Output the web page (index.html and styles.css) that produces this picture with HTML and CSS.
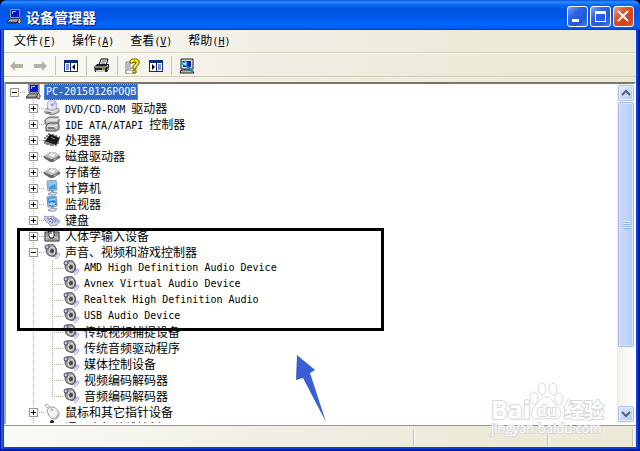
FILE: index.html
```html
<!DOCTYPE html>
<html lang="zh-CN">
<head>
    <meta charset="UTF-8">
    <meta name="viewport" content="width=device-width, initial-scale=1.0">
    <title>设备管理器</title>
    <link rel="stylesheet" href="styles.css">
</head>
<body>
    <!-- Iconos compartidos -->
    <svg class="sprite" width="0" height="0" aria-hidden="true">
        <symbol id="i-pc" viewBox="0 0 16 16">
            <path d="M4 0h10v9H4z" fill="#d8d8d8" stroke="#555"/>
            <path d="M5 1h8v7H5z" fill="#0818d0"/>
            <path d="M6 2h4v1H7v2H6z" fill="#8cf"/>
            <path d="M4 10h9l-2 3H1z" fill="#ddd" stroke="#333"/>
            <path d="M4 11h7M3 12h7" stroke="#888" stroke-dasharray="1 1"/>
            <path d="M1 14h10l2-3" stroke="#222" fill="none"/>
            <path d="M13 9l2 2v2l-1 2-2-1v-2z" fill="#c8c8c8" stroke="#444"/>
        </symbol>
        <symbol id="i-cd" viewBox="0 0 16 16">
            <path d="M1 10l5-3 9 2v3l-6 3-8-2z" fill="#c4c4c4" stroke="#777"/>
            <path d="M1 10l8 2 6-3" fill="none" stroke="#eee"/>
            <circle cx="8" cy="5" r="5" fill="#dde2f4" stroke="#a8adc4"/>
            <path d="M8 5l3-4 2 3z" fill="#b8a8ee"/>
            <path d="M8 5l-4 2 2 2z" fill="#fff"/>
            <circle cx="8" cy="5" r="1" fill="#fff" stroke="#889"/>
            <path d="M3 12l4 1" stroke="#555"/>
        </symbol>
        <symbol id="i-ide" viewBox="0 0 16 16">
            <path d="M1 4l4-3h9l1 2v3l-3 2H1z" fill="#c9c9c9" stroke="#555"/>
            <path d="M2 4h10l3-2" fill="none" stroke="#f4f4f4"/>
            <path d="M2 10l3-3h9l1 2v4l-3 2H2z" fill="#bdbdbd" stroke="#444"/>
            <path d="M3 10h9l2-2" fill="none" stroke="#fff"/>
            <path d="M4 12h6" stroke="#333"/>
            <path d="M10 13h2" stroke="#3a3"/>
        </symbol>
        <symbol id="i-cpu" viewBox="0 0 16 16">
            <path d="M6 2l10 4-4 7-11-4z" fill="#1a1a1a"/>
            <path d="M1 8v4M3 9v4M5 10v3M7 10v4M9 11v3M12 10v4M14 8v4M2 6H0M4 4H2M6 2H4M9 2v2M12 3v2M15 5h1" stroke="#111"/>
            <path d="M7 5l4 2" stroke="#888"/>
        </symbol>
        <symbol id="i-disk" viewBox="0 0 16 16">
            <path d="M0 8l6-4h5l5 4v2l-7 4h-3l-6-4z" fill="#666"/>
            <path d="M0 8l6-4h5l5 3-7 4H7z" fill="#c4c4c4"/>
            <path d="M5 7l3-2 4 2-3 2z" fill="#f3f3f3"/>
            <path d="M10 12l3-2" stroke="#ccc"/>
        </symbol>
        <symbol id="i-screen" viewBox="0 0 16 16">
            <path d="M3 1l9-1 1 10-9 1z" fill="#cfd9e6" stroke="#8796ad"/>
            <path d="M4 2l7-1 1 8-7 1z" fill="#3d95ee"/>
            <path d="M4 2l7-1v3L5 7z" fill="#8ccaff"/>
            <path d="M7 11h3v2H7z" fill="#9aa6b8"/>
            <path d="M4 14l4-2 5 1-2 2H6z" fill="#dde3eb" stroke="#8b97aa"/>
        </symbol>
        <symbol id="i-monitor" viewBox="0 0 16 16">
            <path d="M3 1l9-1 1 10-9 1z" fill="#bfd0e2" stroke="#7086a4"/>
            <path d="M4 2l7-1 1 8-7 1z" fill="#2878dc"/>
            <path d="M5 3l6-1v2L5 5z" fill="#7fe3ff"/>
            <path d="M5 7l3-1 3 1v2H5z" fill="#8ed4ff"/>
            <path d="M7 11h3v2H7z" fill="#8d9aae"/>
            <path d="M4 14l4-2 5 1-2 2H6z" fill="#dde3eb" stroke="#8b97aa"/>
        </symbol>
        <symbol id="i-keyboard" viewBox="0 0 16 16">
            <path d="M0 4l4 1 5-1 7 5-3 4-6 1-7-7z" fill="#cdd3ea" stroke="#8e95b8"/>
            <path d="M3 7l7-1M4 8l8-1M5 10l8-2M7 11l7-2" stroke="#6f79ac" stroke-dasharray="2 1"/>
        </symbol>
        <symbol id="i-hid" viewBox="0 0 16 16">
            <path d="M1 4h14v9H1z" fill="#ccc" stroke="#222"/>
            <path d="M2 6h2M2 8h2M11 6h3M11 8h3M3 11h10" stroke="#666"/>
            <path d="M5 0v4M5 3h5v5q0 2-2 2H7q-2 0-2-2z" fill="#fff" stroke="#111"/>
            <path d="M7 3v3" stroke="#111"/>
        </symbol>
        <symbol id="i-sound" viewBox="0 0 16 16">
            <path d="M4 1h5l4 4v5l-3 3H8L3 8z" fill="#666"/>
            <ellipse cx="7" cy="6" rx="5" ry="6" fill="#999" stroke="#555"/>
            <ellipse cx="8" cy="7" rx="3" ry="4" fill="#aaa" stroke="#ddd"/>
            <circle cx="8" cy="7" r="2" fill="#444"/>
            <circle cx="3" cy="3" r="2" fill="#c3c6ec" stroke="#4b4d6b"/>
            <path d="M14 8q1 3-3 5M16 9q0 4-5 6" fill="none" stroke="#8f97ec"/>
        </symbol>
        <symbol id="i-mouse" viewBox="0 0 16 16">
            <path d="M5 4Q2 4 1 1q3-2 5 2" fill="none" stroke="#aaa"/>
            <path d="M3 6q2-4 6-3 6 2 6 8-1 4-5 4-5 0-7-9z" fill="#f3f3f3" stroke="#999"/>
            <path d="M14 7q2 5-2 8h-3q5-2 5-8z" fill="#aaa"/>
            <path d="M7 4l1 3" stroke="#bbb"/>
            <circle cx="8" cy="6" r="1" fill="#99c"/>
        </symbol>
        <symbol id="i-usb" viewBox="0 0 16 16">
            <circle cx="8" cy="2" r="2" fill="#222"/>
            <path d="M8 3v12M4 6v3l4 3M12 6v2l-4 3" fill="none" stroke="#222" stroke-width="2"/>
        </symbol>
        <symbol id="i-back" viewBox="0 0 16 16">
            <path d="M1 8l5-5v3h8v4H6v3z" fill="#b5b1a4"/>
        </symbol>
        <symbol id="i-print" viewBox="0 0 16 16">
            <path d="M5 7l2-6h7l-2 6z" fill="#fff" stroke="#000"/>
            <path d="M8 3h4M7 5h4" stroke="#555"/>
            <path d="M0 9l3-3h12v5l-2 3H1z" fill="#222"/>
            <path d="M1 9h11l2-2" fill="none" stroke="#ddd"/>
            <path d="M2 12h9v2H2z" fill="#ccc"/>
            <path d="M8 11h3" stroke="#ee0"/>
            <path d="M13 12l2-2M13 9h1" stroke="#aaa"/>
        </symbol>
        <symbol id="i-help" viewBox="0 0 16 16">
            <path d="M1 4h9v10l-2 2H1z" fill="#fff" stroke="#777"/>
            <path d="M2 6h4M2 8h4M2 10h6M2 12h5" stroke="#777"/>
            <path d="M5 5V3l2-2h5l2 2v3l-3 3v2H8V8l3-3V4H8v1z" fill="#fff200" stroke="#655c00"/>
            <path d="M8 12h3v3H8z" fill="#fff200" stroke="#655c00"/>
        </symbol>
        <symbol id="i-scan" viewBox="0 0 16 16">
            <path d="M2 1h12v10H2z" fill="#ddd" stroke="#222"/>
            <path d="M4 3h8v6H4z" fill="#0a22a8"/>
            <path d="M2 12h11l2 3H1z" fill="#bbb" stroke="#222"/>
            <path d="M6 6l8 8" stroke="#1a7fb0" stroke-width="2"/>
            <path d="M3 3l2 2 1-2 2 1v3L6 8 3 6z" fill="#9df" stroke="#178bc0"/>
        </symbol>
    </svg>

    <div class="window">
        <header class="titlebar">
            <svg class="icon"><use href="#i-pc"/></svg>
            <h1>设备管理器</h1>
            <div class="window-buttons">
                <button aria-label="最小化"><svg viewBox="0 0 21 21"><path d="M5 13h7v3H5z" fill="#fff"/></svg></button>
                <button aria-label="最大化"><svg viewBox="0 0 21 21"><path d="M5 5h11v11H5zM6 8v7h9V8z" fill="#fff" fill-rule="evenodd"/></svg></button>
                <button class="close" aria-label="关闭"><svg viewBox="0 0 21 21"><path d="M5 5l10 10M15 5L5 15" stroke="#fff" stroke-width="2"/></svg></button>
            </div>
        </header>

        <nav class="menu">
            <button>文件<span class="latin">(<u>F</u>)</span></button>
            <button>操作<span class="latin">(<u>A</u>)</span></button>
            <button>查看<span class="latin">(<u>V</u>)</span></button>
            <button>帮助<span class="latin">(<u>H</u>)</span></button>
        </nav>

        <div class="toolbar">
            <button aria-label="后退" disabled><svg class="icon"><use href="#i-back"/></svg></button>
            <button aria-label="前进" disabled><svg class="icon flip"><use href="#i-back"/></svg></button>
            <span class="separator"></span>
            <button aria-label="显示/隐藏控制台树"><svg class="icon" viewBox="0 0 16 16"><path d="M1 2h14v12H1z" fill="#0a2a80"/><path d="M2 5h5v8H2zM8 5h6v8H8z" fill="#fff"/><path d="M3 7h3M3 9h3M3 11h3" stroke="#0a2a80"/><path d="M12 6v6L9 9z" fill="#000"/></svg></button>
            <span class="separator"></span>
            <button aria-label="打印"><svg class="icon"><use href="#i-print"/></svg></button>
            <span class="separator"></span>
            <button aria-label="帮助"><svg class="icon"><use href="#i-help"/></svg></button>
            <button aria-label="显示/隐藏操作窗格"><svg class="icon" viewBox="0 0 16 16"><path d="M1 2h14v12H1z" fill="#0a2a80"/><path d="M2 5h6v8H2zM9 5h5v8H9z" fill="#fff"/><path d="M10 7h3M10 9h3M10 11h3" stroke="#0a2a80"/><path d="M4 6v6l3-3z" fill="#000"/></svg></button>
            <span class="separator"></span>
            <button aria-label="扫描检测硬件改动"><svg class="icon"><use href="#i-scan"/></svg></button>
        </div>

        <main class="pane">
            <ul class="tree">
                <li>
                    <div class="row"><span class="guide"><button class="toggle open" aria-label="折叠"></button></span><svg class="icon"><use href="#i-pc"/></svg><span class="name selected latin">PC-20150126POQB</span></div>
                    <ul class="branch">
                        <li><div class="row"><span class="guide"><button class="toggle" aria-label="展开"></button></span><svg class="icon"><use href="#i-cd"/></svg><span class="name"><span class="latin">DVD/CD-ROM </span>驱动器</span></div></li>
                        <li><div class="row"><span class="guide"><button class="toggle" aria-label="展开"></button></span><svg class="icon"><use href="#i-ide"/></svg><span class="name"><span class="latin">IDE ATA/ATAPI </span>控制器</span></div></li>
                        <li><div class="row"><span class="guide"><button class="toggle" aria-label="展开"></button></span><svg class="icon"><use href="#i-cpu"/></svg><span class="name">处理器</span></div></li>
                        <li><div class="row"><span class="guide"><button class="toggle" aria-label="展开"></button></span><svg class="icon"><use href="#i-disk"/></svg><span class="name">磁盘驱动器</span></div></li>
                        <li><div class="row"><span class="guide"><button class="toggle" aria-label="展开"></button></span><svg class="icon"><use href="#i-disk"/></svg><span class="name">存储卷</span></div></li>
                        <li><div class="row"><span class="guide"><button class="toggle" aria-label="展开"></button></span><svg class="icon"><use href="#i-screen"/></svg><span class="name">计算机</span></div></li>
                        <li><div class="row"><span class="guide"><button class="toggle" aria-label="展开"></button></span><svg class="icon"><use href="#i-monitor"/></svg><span class="name">监视器</span></div></li>
                        <li><div class="row"><span class="guide"><button class="toggle" aria-label="展开"></button></span><svg class="icon"><use href="#i-keyboard"/></svg><span class="name">键盘</span></div></li>
                        <li><div class="row"><span class="guide"><button class="toggle" aria-label="展开"></button></span><svg class="icon"><use href="#i-hid"/></svg><span class="name">人体学输入设备</span></div></li>
                        <li>
                            <div class="row"><span class="guide"><button class="toggle open" aria-label="折叠"></button></span><svg class="icon"><use href="#i-sound"/></svg><span class="name">声音、视频和游戏控制器</span></div>
                            <ul class="branch last">
                                <li><div class="row"><span class="guide"></span><svg class="icon"><use href="#i-sound"/></svg><span class="name latin">AMD High Definition Audio Device</span></div></li>
                                <li><div class="row"><span class="guide"></span><svg class="icon"><use href="#i-sound"/></svg><span class="name latin">Avnex Virtual Audio Device</span></div></li>
                                <li><div class="row"><span class="guide"></span><svg class="icon"><use href="#i-sound"/></svg><span class="name latin">Realtek High Definition Audio</span></div></li>
                                <li><div class="row"><span class="guide"></span><svg class="icon"><use href="#i-sound"/></svg><span class="name latin">USB Audio Device</span></div></li>
                                <li><div class="row"><span class="guide"></span><svg class="icon"><use href="#i-sound"/></svg><span class="name">传统视频捕捉设备</span></div></li>
                                <li><div class="row"><span class="guide"></span><svg class="icon"><use href="#i-sound"/></svg><span class="name">传统音频驱动程序</span></div></li>
                                <li><div class="row"><span class="guide"></span><svg class="icon"><use href="#i-sound"/></svg><span class="name">媒体控制设备</span></div></li>
                                <li><div class="row"><span class="guide"></span><svg class="icon"><use href="#i-sound"/></svg><span class="name">视频编码解码器</span></div></li>
                                <li><div class="row"><span class="guide"></span><svg class="icon"><use href="#i-sound"/></svg><span class="name">音频编码解码器</span></div></li>
                            </ul>
                        </li>
                        <li><div class="row"><span class="guide"><button class="toggle" aria-label="展开"></button></span><svg class="icon"><use href="#i-mouse"/></svg><span class="name">鼠标和其它指针设备</span></div></li>
                        <li><div class="row"><span class="guide"><button class="toggle" aria-label="展开"></button></span><svg class="icon"><use href="#i-usb"/></svg><span class="name">通用串行总线控制器</span></div></li>
                    </ul>
                </li>
            </ul>
            <div class="scrollbar">
                <button aria-label="向上滚动"><svg viewBox="0 0 16 16"><path d="M4 10l4-4 4 4" fill="none" stroke="#4d6185" stroke-width="2"/></svg></button>
                <div class="thumb"><span class="grip"></span></div>
                <div class="track"></div>
                <button aria-label="向下滚动"><svg viewBox="0 0 16 16"><path d="M4 6l4 4 4-4" fill="none" stroke="#4d6185" stroke-width="2"/></svg></button>
            </div>
        </main>

        <footer class="statusbar">
            <span></span>
            <span></span>
            <span></span>
        </footer>
    </div>

    <!-- Anotaciones sobre la ventana -->
    <div class="highlight"></div>
    <svg class="arrow" viewBox="0 0 32 68" aria-hidden="true"><path d="M2 1l18 15-5 3 16 49L8 24l-7 2z" fill="#3a5fd2"/></svg>
    <svg class="watermark" viewBox="0 0 120 60">
        <g class="paw">
            <ellipse cx="46" cy="18" rx="4" ry="6"/>
            <ellipse cx="54" cy="9" rx="4" ry="6"/>
            <ellipse cx="65" cy="9" rx="4" ry="6"/>
            <ellipse cx="71" cy="19" rx="4" ry="6"/>
            <path d="M58 17q5 0 9 7 6 5 6 9-1 7-8 6-7-1-14 0-8 1-8-6 0-4 6-9 4-7 9-7z"/>
        </g>
        <text class="brand" x="3" y="39">Bai</text>
        <text class="du" x="49" y="36">du</text>
        <text class="cn" x="76" y="38">经验</text>
        <text class="url" x="3" y="53">jingyan.baidu.com</text>
    </svg>
</body>
</html>
```

FILE: styles.css
```css
* {
    box-sizing: border-box;
}
body {
    margin: 0;
    background-color: #000;
    font-family: "Noto Sans CJK SC", sans-serif;
    font-size: 12px;
    line-height: 16px;
    color: #000;
}
button {
    margin: 0;
    padding: 0;
    border: none;
    background: none;
    font: inherit;
    color: inherit;
}
ul {
    margin: 0;
    padding: 0;
    list-style: none;
}
.sprite {
    position: absolute;
}
.icon {
    display: block;
    flex: none;
    width: 16px;
    height: 16px;
}
.flip {
    transform: scaleX(-1);
}
.latin {
    font-family: "DejaVu Sans Mono", monospace;
    font-size: 10px;
    white-space: pre;
}

/* Ventana */
.window {
    display: flex;
    flex-direction: column;
    height: 100vh;
    padding: 0 4px 4px;
    overflow: hidden;
    border-radius: 7px 7px 0 0;
    background-color: #0046dc;
    box-shadow: inset 1px 0 #0019b0, inset -2px 0 #0019a8, inset 0 -2px #0016a0, inset 3px 0 #1660e8;
}
.titlebar {
    display: flex;
    flex: none;
    align-items: center;
    height: 30px;
    margin: 0 -4px;
    padding: 3px 6px 0;
    background: linear-gradient(#0a50d8, #2a8cff 2px, #0868f0 5px, #0054e3 9px, #0058ea 18px, #0066ff 25px, #005cf5 28px, #0040c4);
}
.titlebar h1 {
    flex: 1;
    margin: 0 0 0 4px;
    font-size: 14px;
    line-height: 20px;
    color: #fff;
    text-shadow: 1px 1px #0a1883;
}
.window-buttons {
    display: flex;
    gap: 2px;
}
.window-buttons button {
    width: 21px;
    height: 21px;
    border: 1px solid #fff;
    border-radius: 3px;
    background: linear-gradient(135deg, #7ea4f8, #2f62e4 35%, #2458dc 70%, #3e7cf8);
}
.window-buttons .close {
    background: linear-gradient(135deg, #f0a28c, #e0532f 35%, #cf4018 70%, #e0603c);
}
.window-buttons svg {
    display: block;
    margin: -1px;
    width: 21px;
    height: 21px;
}

/* Menu y barra de herramientas */
.menu,
.toolbar,
.statusbar {
    flex: none;
    background: linear-gradient(90deg, #fafaf7, #f1efe5 40%, #ece9d8 80%);
}
.menu {
    display: flex;
    height: 23px;
    padding: 0 2px;
    border-bottom: 1px solid #d5d0bc;
}
.menu button {
    padding: 0 8px;
}
.toolbar {
    display: flex;
    align-items: center;
    height: 29px;
    padding: 0 1px 5px;
    border-top: 1px solid #fff;
    background: linear-gradient(#d0ccb8, #d0ccb8) 0 22px / 100% 1px no-repeat, linear-gradient(90deg, #fafaf7, #f1efe5 40%, #ece9d8 80%);
}
.toolbar button {
    display: flex;
    justify-content: center;
    width: 23px;
}
.separator {
    width: 8px;
    height: 19px;
    background: linear-gradient(#c5c1ae, #c5c1ae) 4px 0 / 1px 100% no-repeat;
}

/* Arbol de dispositivos */
.pane {
    display: flex;
    flex: 1;
    min-height: 0;
    border: 2px solid #8a877a;
    border-color: #7a776a #fff #fff #aca899;
    background-color: #fff;
}
.tree {
    flex: 1;
    overflow: hidden;
}
.branch {
    margin-left: 19px;
    background: repeating-linear-gradient(#aca899 0 1px, transparent 1px 2px) 8px 0 / 1px 100% no-repeat;
}
.branch.last {
    background-size: 1px calc(100% - 8px);
}
.row {
    display: flex;
    height: 16px;
}
.guide {
    display: flex;
    align-items: center;
    width: 19px;
    padding-left: 4px;
    background: repeating-linear-gradient(90deg, #aca899 0 1px, transparent 1px 2px) 8px 8px / 11px 1px no-repeat;
}
.toggle {
    width: 9px;
    height: 9px;
    border: 1px solid #9c9889;
    background: linear-gradient(#000, #000) 1px 3px / 5px 1px no-repeat, linear-gradient(#000, #000) 3px 1px / 1px 5px no-repeat, #fff;
}
.toggle.open {
    background: linear-gradient(#000, #000) 1px 3px / 5px 1px no-repeat, #fff;
}
.name {
    margin-left: 3px;
    padding: 0 2px;
    white-space: pre;
}
.selected {
    background-color: #316ac5;
    color: #fff;
    outline: 1px dotted #d69a3a;
    outline-offset: -1px;
}

/* Barra de desplazamiento */
.scrollbar {
    display: flex;
    flex-direction: column;
    gap: 1px;
    width: 17px;
    padding: 1px 0;
    border-left: 1px solid #eeede5;
    background: linear-gradient(90deg, #f3f1ec, #fefefb);
}
.scrollbar button {
    flex: none;
    height: 16px;
    border: 1px solid #a9bff0;
    border-radius: 2px;
    background: linear-gradient(135deg, #e1eafe, #b4c8f6);
    box-shadow: inset 0 0 0 1px #e6eeff;
}
.scrollbar svg {
    display: block;
    margin: -1px;
    width: 16px;
    height: 16px;
}
.thumb {
    display: flex;
    flex: 81;
    align-items: center;
    justify-content: center;
    border: 1px solid #a3b9ea;
    border-radius: 2px;
    background: linear-gradient(90deg, #c9d8fc, #bfd1fb 70%, #b7cbf8);
    box-shadow: inset 0 0 0 1px #dce6ff;
}
.grip {
    width: 7px;
    height: 8px;
    background: repeating-linear-gradient(#eef4fe 0 1px, #8cb0f8 1px 2px);
}
.track {
    flex: 19;
}

/* Barra de estado */
.statusbar {
    display: flex;
    height: 22px;
    padding: 3px 2px 1px 0;
    border-top: 1px solid #9c998a;
}
.statusbar span {
    flex: 412;
    border-right: 1px solid #fff;
    box-shadow: inset -1px 0 #c5c1ae;
}
.statusbar span:nth-child(2) {
    flex: 134;
}
.statusbar span:nth-child(3) {
    flex: 84;
}

/* Anotaciones */
.highlight {
    position: absolute;
    left: 17px;
    top: 228px;
    width: 367px;
    height: 103px;
    border: 3px solid #000;
}
.arrow {
    position: absolute;
    left: 295px;
    top: 354px;
    width: 32px;
    height: 68px;
}
.watermark {
    position: absolute;
    left: 488px;
    top: 380px;
    width: 120px;
    height: 60px;
    fill: #fff;
    stroke: #d8d8d8;
    stroke-width: 1px;
    font-family: "Open Sans", sans-serif;
}
.watermark text {
    paint-order: stroke;
    stroke-width: 2px;
}
.watermark .brand {
    font-size: 25px;
    font-weight: 700;
}
.watermark .du {
    font-size: 15px;
    font-weight: 700;
}
.watermark .cn {
    font-family: "Noto Sans CJK SC", sans-serif;
    font-size: 20px;
    font-weight: 700;
}
.watermark .url {
    font-size: 13px;
}
```
